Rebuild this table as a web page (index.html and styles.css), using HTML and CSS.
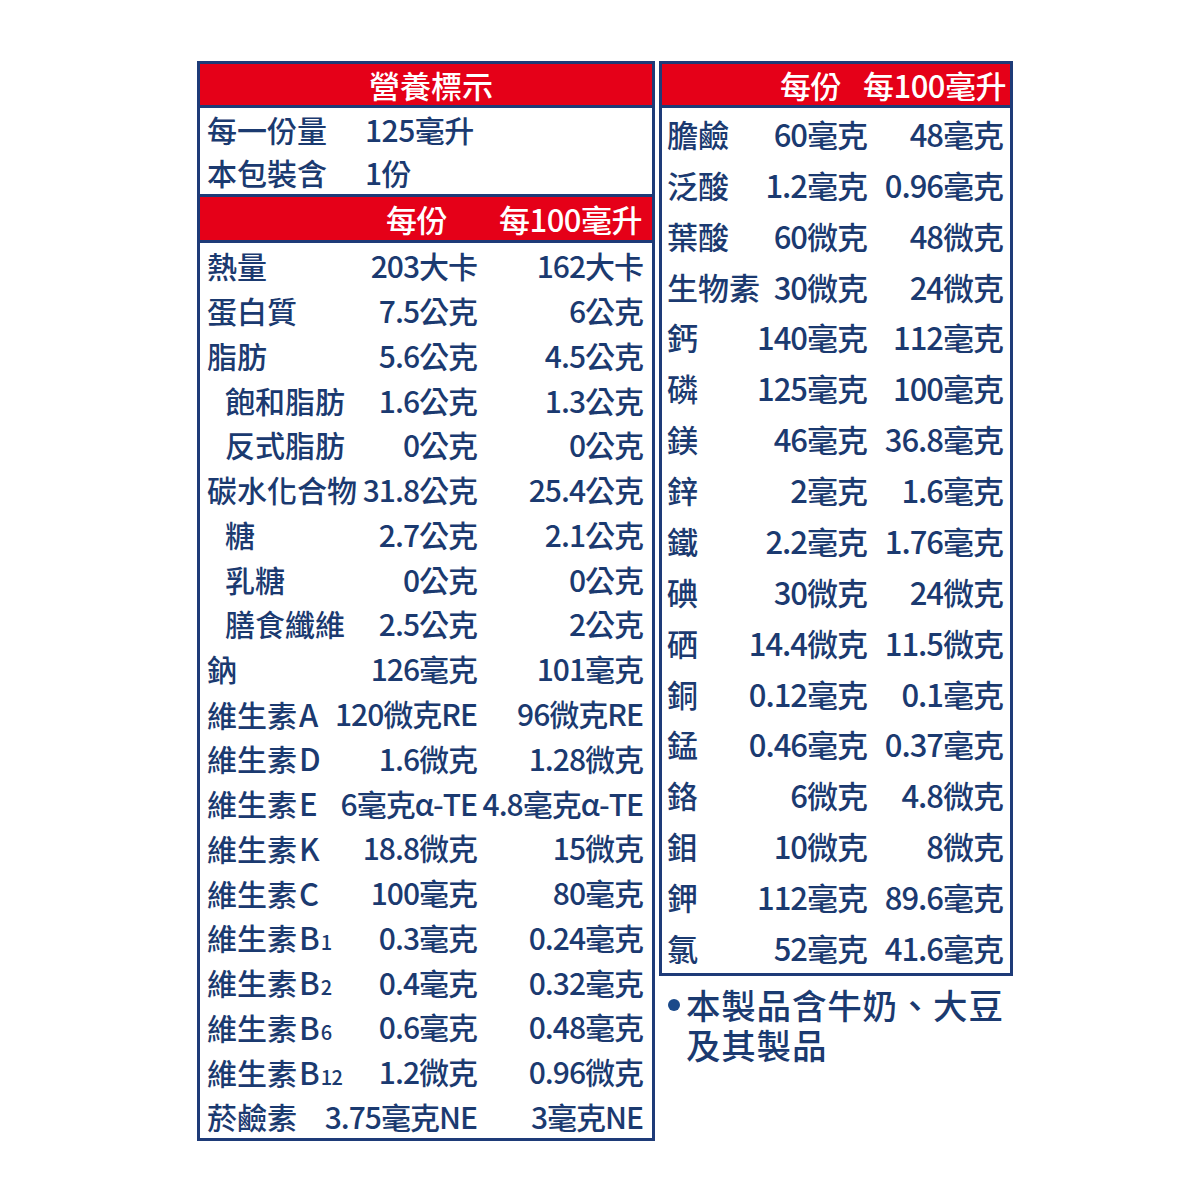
FILE: index.html
```html
<!DOCTYPE html>
<html lang="zh-Hant">
<head>
<meta charset="utf-8">
<title>營養標示</title>
<link rel="stylesheet" href="styles.css">
</head>
<body>
<div class="page">
  <div class="table left">
    <div class="title">營養標示</div>
    <div class="serving">
      <div class="srow"><span>每一份量</span><span>125毫升</span></div>
      <div class="srow"><span>本包裝含</span><span>1份</span></div>
    </div>
    <div class="colhead lhead"><span>每份</span><span>每100毫升</span></div>
    <div class="rows lrows">
      <div class="row"><span>熱量</span><span class="v">203大卡</span><span class="v">162大卡</span></div>
      <div class="row"><span>蛋白質</span><span class="v">7.5公克</span><span class="v">6公克</span></div>
      <div class="row"><span>脂肪</span><span class="v">5.6公克</span><span class="v">4.5公克</span></div>
      <div class="row"><span class="ind">飽和脂肪</span><span class="v">1.6公克</span><span class="v">1.3公克</span></div>
      <div class="row"><span class="ind">反式脂肪</span><span class="v">0公克</span><span class="v">0公克</span></div>
      <div class="row"><span>碳水化合物</span><span class="v">31.8公克</span><span class="v">25.4公克</span></div>
      <div class="row"><span class="ind">糖</span><span class="v">2.7公克</span><span class="v">2.1公克</span></div>
      <div class="row"><span class="ind">乳糖</span><span class="v">0公克</span><span class="v">0公克</span></div>
      <div class="row"><span class="ind">膳食纖維</span><span class="v">2.5公克</span><span class="v">2公克</span></div>
      <div class="row"><span>鈉</span><span class="v">126毫克</span><span class="v">101毫克</span></div>
      <div class="row"><span>維生素<span class="lat">A</span></span><span class="v">120微克RE</span><span class="v">96微克RE</span></div>
      <div class="row"><span>維生素<span class="lat">D</span></span><span class="v">1.6微克</span><span class="v">1.28微克</span></div>
      <div class="row"><span>維生素<span class="lat">E</span></span><span class="v">6毫克α-TE</span><span class="v">4.8毫克α-TE</span></div>
      <div class="row"><span>維生素<span class="lat">K</span></span><span class="v">18.8微克</span><span class="v">15微克</span></div>
      <div class="row"><span>維生素<span class="lat">C</span></span><span class="v">100毫克</span><span class="v">80毫克</span></div>
      <div class="row"><span>維生素<span class="lat">B</span><span class="sub">1</span></span><span class="v">0.3毫克</span><span class="v">0.24毫克</span></div>
      <div class="row"><span>維生素<span class="lat">B</span><span class="sub">2</span></span><span class="v">0.4毫克</span><span class="v">0.32毫克</span></div>
      <div class="row"><span>維生素<span class="lat">B</span><span class="sub">6</span></span><span class="v">0.6毫克</span><span class="v">0.48毫克</span></div>
      <div class="row"><span>維生素<span class="lat">B</span><span class="sub">12</span></span><span class="v">1.2微克</span><span class="v">0.96微克</span></div>
      <div class="row"><span>菸鹼素</span><span class="v">3.75毫克NE</span><span class="v">3毫克NE</span></div>
    </div>
  </div>
  <div class="rightcol">
    <div class="table right">
      <div class="colhead rhead"><span>每份</span><span>每100毫升</span></div>
      <div class="rows rrows">
        <div class="row"><span>膽鹼</span><span class="v">60毫克</span><span class="v">48毫克</span></div>
        <div class="row"><span>泛酸</span><span class="v">1.2毫克</span><span class="v">0.96毫克</span></div>
        <div class="row"><span>葉酸</span><span class="v">60微克</span><span class="v">48微克</span></div>
        <div class="row"><span>生物素</span><span class="v">30微克</span><span class="v">24微克</span></div>
        <div class="row"><span>鈣</span><span class="v">140毫克</span><span class="v">112毫克</span></div>
        <div class="row"><span>磷</span><span class="v">125毫克</span><span class="v">100毫克</span></div>
        <div class="row"><span>鎂</span><span class="v">46毫克</span><span class="v">36.8毫克</span></div>
        <div class="row"><span>鋅</span><span class="v">2毫克</span><span class="v">1.6毫克</span></div>
        <div class="row"><span>鐵</span><span class="v">2.2毫克</span><span class="v">1.76毫克</span></div>
        <div class="row"><span>碘</span><span class="v">30微克</span><span class="v">24微克</span></div>
        <div class="row"><span>硒</span><span class="v">14.4微克</span><span class="v">11.5微克</span></div>
        <div class="row"><span>銅</span><span class="v">0.12毫克</span><span class="v">0.1毫克</span></div>
        <div class="row"><span>錳</span><span class="v">0.46毫克</span><span class="v">0.37毫克</span></div>
        <div class="row"><span>鉻</span><span class="v">6微克</span><span class="v">4.8微克</span></div>
        <div class="row"><span>鉬</span><span class="v">10微克</span><span class="v">8微克</span></div>
        <div class="row"><span>鉀</span><span class="v">112毫克</span><span class="v">89.6毫克</span></div>
        <div class="row"><span>氯</span><span class="v">52毫克</span><span class="v">41.6毫克</span></div>
      </div>
    </div>
    <div class="note">
      <span class="dot"></span>
      <p>本製品含牛奶、大豆<br>及其製品</p>
    </div>
  </div>
</div>
</body>
</html>
```
FILE: styles.css
```css
* { box-sizing: border-box; margin: 0; padding: 0; }
html, body { background: #ffffff; }
body {
  font-family: "Noto Sans CJK TC", "Noto Sans", sans-serif;
  font-weight: 500;
  color: #1b3a70;
}
.page {
  display: flex;
  align-items: flex-start;
  gap: 4px;
  padding: 61px 0 0 197px;
}
.table {
  border: 3px solid #1e3b78;
  background: #fff;
}
.left { width: 458px; }
.rightcol { width: 354px; }
.right { width: 354px; }

.title {
  height: 44px;
  background: #e50018;
  border-bottom: 3px solid #1e3b78;
  color: #fff;
  font-size: 31px;
  line-height: 41px;
  text-align: center;
  padding-left: 10px;
}
.serving {
  height: 89px;
  border-bottom: 3px solid #1e3b78;
  padding: 0 0 0 7px;
}
.srow {
  display: grid;
  grid-template-columns: 158px 1fr;
  height: 43px;
  align-items: center;
  font-size: 30px;
  line-height: 43px;
}
.srow span:last-child { letter-spacing: -0.5px; }

.colhead {
  display: flex;
  justify-content: flex-end;
  align-items: center;
  background: #e50018;
  border-bottom: 3px solid #1e3b78;
  color: #fff;
  font-size: 31px;
  letter-spacing: -0.5px;
}
.lhead { height: 46px; padding-right: 10px; gap: 52px; }
.rhead { height: 44px; padding-right: 4px; gap: 22px; }

.row {
  display: grid;
  align-items: center;
  white-space: nowrap;
}
.lrows .row {
  grid-template-columns: auto 1fr 166px;
  height: 44.75px;
  font-size: 30px;
  padding: 0 9px 0 7px;
}
.rrows .row {
  grid-template-columns: auto 1fr 136px;
  height: 50.88px;
  font-size: 31px;
  padding: 0 7px 0 5px;
}
.v {
  text-align: right;
  letter-spacing: -1px;
}
.ind { padding-left: 18px; }
.lat {
  font-size: 31px;
  margin-left: 2px;
}
.sub {
  font-size: 20px;
  letter-spacing: -0.5px;
  margin-left: 1px;
}

.note {
  display: flex;
  align-items: flex-start;
  margin-top: 8px;
  padding-left: 9px;
}
.dot {
  width: 12px;
  height: 12px;
  border-radius: 50%;
  background: #1b4a8a;
  margin-top: 15px;
  margin-right: 6px;
  flex: none;
}
.note p {
  font-size: 34.5px;
  line-height: 40px;
  color: #1b3a70;
  letter-spacing: 0.8px;
}
```
